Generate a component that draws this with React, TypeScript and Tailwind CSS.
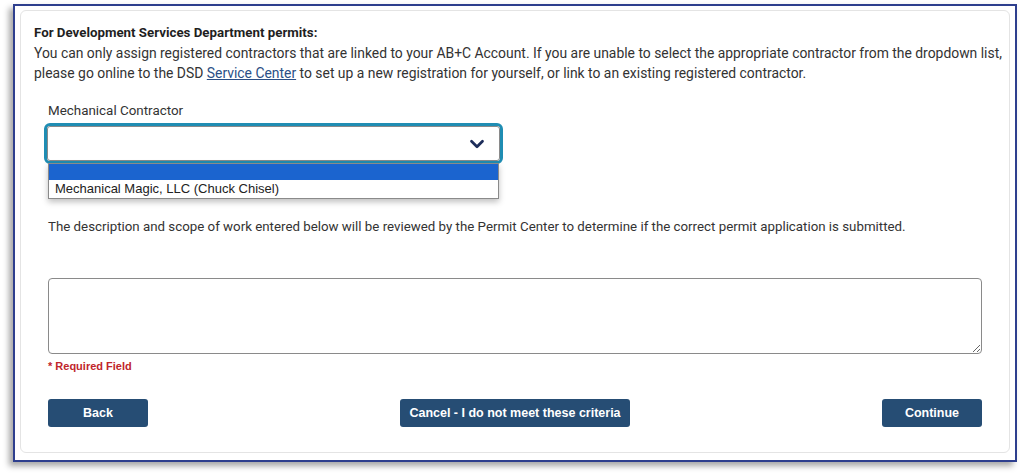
import { ChevronDown } from "lucide-react";

const roboto = "font-['Roboto','Liberation_Sans',sans-serif]";
const arial = "font-['Liberation_Sans',Arial,sans-serif]";

function NavButton({ label, wide }: { label: string; wide?: boolean }) {
  return (
    <button
      className={`h-[28px] ${wide ? "w-[230px]" : "w-[100px]"} rounded-[3px] bg-[#264d74] text-[12.5px] font-bold text-white ${arial}`}
    >
      {label}
    </button>
  );
}

export default function App() {
  return (
    <div className="h-[474px] w-[1024px] bg-white pl-[13px] pt-[4px]">
      <div className="h-[458px] w-[1004px] border-2 border-[#2e3f8e] bg-white pb-[7px] pl-[5px] pr-[5px] pt-[4px] shadow-[-4px_4px_6px_rgba(0,0,0,0.35)]">
        <div className={`h-full rounded-[6px] border border-[#e4e4e4] pl-[13px] pr-[6px] pt-[12px] leading-[20px] text-[#333] ${roboto}`}>
          <p className="whitespace-nowrap text-[13.3px] font-bold text-[#1f1f1f]">For Development Services Department permits:</p>
          <p className="whitespace-nowrap text-[13.9px]">
            You can only assign registered contractors that are linked to your AB+C Account. If you are unable to select the appropriate contractor from the dropdown list,
            <br />
            please go online to the DSD{" "}
            <a className="text-[#2b4f86] underline">Service Center</a> to set up a new registration for yourself, or link to an existing registered contractor.
          </p>

          <div className="pl-[14px] pr-[21px]">
            <label className="mt-[19px] block text-[13.4px] leading-[18px] text-[#333]">Mechanical Contractor</label>

            <div className="relative -ml-[4px] mt-[3px] w-[459px]">
              <div className="h-[41px] rounded-[6px] border-[3px] border-[#1f8db3]">
                <div className="flex h-full items-center justify-end rounded-[3px] border border-[#8a8a8a] bg-white pr-[11px]">
                  <ChevronDown className="h-[22px] w-[22px] text-[#1d2d5a]" strokeWidth={3} />
                </div>
              </div>
              <div className={`absolute left-[4px] top-[40px] w-[451px] border border-[#8a8a8a] bg-white shadow-[0_3px_6px_rgba(0,0,0,0.25)] ${arial}`}>
                <div className="h-[16px] bg-[#1b64cf]" />
                <div className="h-[18px] pl-[6px] text-[13px] leading-[18px] text-[#222]">Mechanical Magic, LLC (Chuck Chisel)</div>
              </div>
            </div>

            <p className="mt-[53px] whitespace-nowrap text-[13.3px] text-[#333]">
              The description and scope of work entered below will be reviewed by the Permit Center to determine if the correct permit application is submitted.
            </p>

            <textarea className="mt-[41px] block h-[76px] w-full resize-y rounded-[4px] border border-[#8a8a8a] bg-white" />

            <p className={`mt-[3px] text-[11px] font-bold leading-[18px] text-[#c0252b] ${arial}`}>* Required Field</p>

            <div className="mt-[24px] flex items-center justify-between">
              <NavButton label="Back" />
              <NavButton label="Cancel - I do not meet these criteria" wide />
              <NavButton label="Continue" />
            </div>
          </div>
        </div>
      </div>
    </div>
  );
}
